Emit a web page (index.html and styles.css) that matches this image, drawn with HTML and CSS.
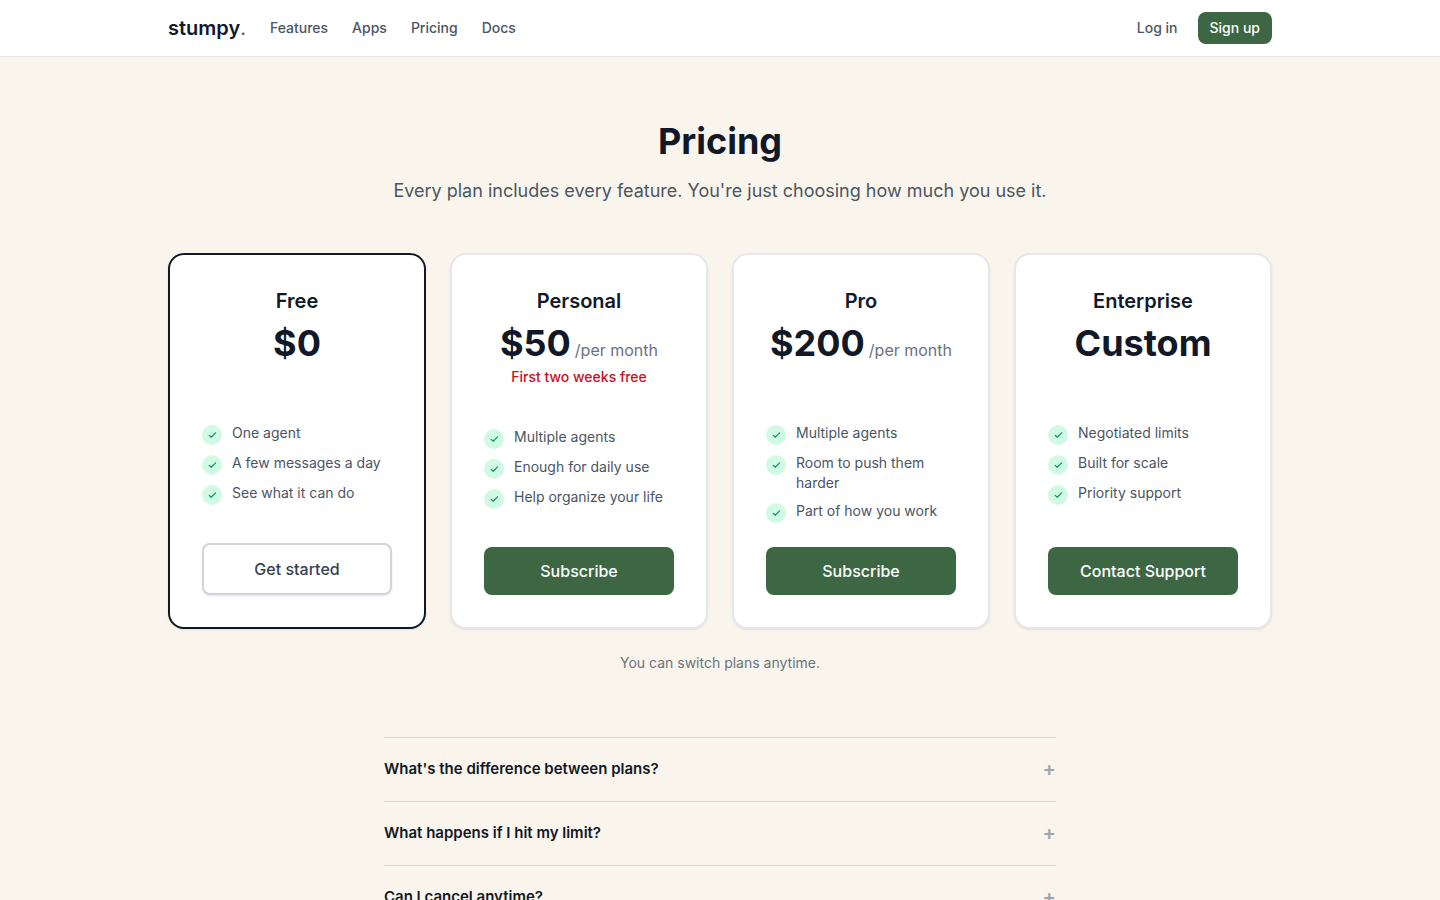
FILE: index.html
```html
<!DOCTYPE html>
<html lang="en">
<head>
<meta charset="utf-8">
<meta name="viewport" content="width=device-width, initial-scale=1">
<title>Pricing - stumpy</title>
<link rel="stylesheet" href="styles.css">
</head>
<body>
<svg class="sprite" aria-hidden="true">
  <symbol id="check" viewBox="0 0 20 20"><path d="M7.2 10.4 L9.2 12.2 L13.6 7.9" fill="none" stroke="currentColor" stroke-width="1.2" stroke-linecap="round" stroke-linejoin="round"/></symbol>
</svg>
<header class="site-header">
  <div class="container header-row">
    <nav class="nav">
      <a class="logo" href="#">stumpy<span class="logo-dot">.</span></a>
      <a class="nav-link" href="#">Features</a>
      <a class="nav-link" href="#">Apps</a>
      <a class="nav-link" href="#">Pricing</a>
      <a class="nav-link" href="#">Docs</a>
    </nav>
    <div class="account">
      <a class="nav-link" href="#">Log in</a>
      <a class="signup" href="#">Sign up</a>
    </div>
  </div>
</header>
<main class="container main">
  <h1 class="title">Pricing</h1>
  <p class="subtitle">Every plan includes every feature. You're just choosing how much you use it.</p>
  <div class="plans">
    <section class="card card-current">
      <h2 class="plan-name">Free</h2>
      <p class="price">$0</p>
      <p class="note note-empty"></p>
      <ul class="features">
        <li class="feature"><svg class="check"><use href="#check"/></svg><span>One agent</span></li>
        <li class="feature"><svg class="check"><use href="#check"/></svg><span>A few messages a day</span></li>
        <li class="feature"><svg class="check"><use href="#check"/></svg><span>See what it can do</span></li>
      </ul>
      <button class="button button-outline" type="button">Get started</button>
    </section>
    <section class="card">
      <h2 class="plan-name">Personal</h2>
      <p class="price">$50 <span class="period">/per month</span></p>
      <p class="note">First two weeks free</p>
      <ul class="features">
        <li class="feature"><svg class="check"><use href="#check"/></svg><span>Multiple agents</span></li>
        <li class="feature"><svg class="check"><use href="#check"/></svg><span>Enough for daily use</span></li>
        <li class="feature"><svg class="check"><use href="#check"/></svg><span>Help organize your life</span></li>
      </ul>
      <button class="button" type="button">Subscribe</button>
    </section>
    <section class="card">
      <h2 class="plan-name">Pro</h2>
      <p class="price">$200 <span class="period">/per month</span></p>
      <p class="note note-empty"></p>
      <ul class="features">
        <li class="feature"><svg class="check"><use href="#check"/></svg><span>Multiple agents</span></li>
        <li class="feature"><svg class="check"><use href="#check"/></svg><span>Room to push them harder</span></li>
        <li class="feature"><svg class="check"><use href="#check"/></svg><span>Part of how you work</span></li>
      </ul>
      <button class="button" type="button">Subscribe</button>
    </section>
    <section class="card">
      <h2 class="plan-name">Enterprise</h2>
      <p class="price">Custom</p>
      <p class="note note-empty"></p>
      <ul class="features">
        <li class="feature"><svg class="check"><use href="#check"/></svg><span>Negotiated limits</span></li>
        <li class="feature"><svg class="check"><use href="#check"/></svg><span>Built for scale</span></li>
        <li class="feature"><svg class="check"><use href="#check"/></svg><span>Priority support</span></li>
      </ul>
      <button class="button" type="button">Contact Support</button>
    </section>
  </div>
  <p class="switch-note">You can switch plans anytime.</p>
  <div class="faq">
    <button class="question" type="button"><span>What's the difference between plans?</span><span class="plus">+</span></button>
    <button class="question" type="button"><span>What happens if I hit my limit?</span><span class="plus">+</span></button>
    <button class="question" type="button"><span>Can I cancel anytime?</span><span class="plus">+</span></button>
  </div>
</main>
</body>
</html>
```

FILE: styles.css
```css
* { box-sizing: border-box; }
html { scrollbar-width: none; }
body {
  margin: 0;
  background: #faf5ec;
  color: #111827;
  font-family: Inter, "Liberation Sans", sans-serif;
  font-size: 14px;
  line-height: 20px;
  font-optical-sizing: auto;
}
h1, h2, p, ul { margin: 0; padding: 0; }
a { color: inherit; text-decoration: none; }
button { font-family: inherit; cursor: pointer; }
.sprite { display: none; }
.container { max-width: 1152px; margin: 0 auto; padding: 0 24px; }

.site-header { background: #fff; border-bottom: 1px solid #e5e7eb; }
.header-row { display: flex; align-items: center; justify-content: space-between; height: 56px; }
.nav { display: flex; align-items: center; gap: 24px; }
.logo { font-size: 20px; line-height: 28px; font-weight: 600; }
.logo-dot { color: #3c6742; font-weight: 400; }
.nav-link { color: #4b5563; font-weight: 500; }
.account { display: flex; align-items: center; gap: 20px; }
.signup { padding: 6px 12px; border-radius: 8px; background: #3c6742; color: #fff; font-weight: 500; }

.main { padding-top: 64px; padding-bottom: 64px; }
.title { font-size: 36px; line-height: 40px; font-weight: 700; text-align: center; }
.subtitle { margin-top: 16px; color: #4b5563; font-size: 18px; line-height: 28px; text-align: center; }

.plans { display: grid; grid-template-columns: repeat(auto-fit, minmax(240px, 1fr)); gap: 24px; margin-top: 48px; }
.card {
  display: flex;
  flex-direction: column;
  padding: 32px;
  border: 2px solid #e5e7eb;
  border-radius: 16px;
  background: #fff;
  box-shadow: 0 1px 2px rgba(0, 0, 0, 0.1);
}
.card-current { border-color: #111827; }
.plan-name { font-size: 20px; line-height: 28px; font-weight: 600; text-align: center; }
.price {
  display: flex;
  align-items: baseline;
  justify-content: center;
  gap: 4px;
  height: 40px;
  margin-top: 8px;
  font-size: 36px;
  line-height: 40px;
  font-weight: 700;
  white-space: nowrap;
}
.period { color: #6b7280; font-size: 16px; line-height: 24px; font-weight: 400; }
.note { margin-top: 4px; color: #c8101e; font-weight: 500; text-align: center; }
.note-empty { height: 20px; margin-top: 0; }
.features { display: flex; flex-direction: column; flex-grow: 1; gap: 8px; margin: 40px 0 24px; list-style: none; }
.feature { display: flex; align-items: flex-start; gap: 10px; color: #4b5563; }
.check { flex: none; width: 20px; height: 20px; margin-top: 2px; border-radius: 50%; background: #d1fae5; color: #059669; }
.button { height: 48px; padding: 0 16px; border: 0; border-radius: 8px; background: #3c6742; color: #fff; font-size: 16px; line-height: 24px; font-weight: 500; }
.button-outline { height: 52px; border: 2px solid #d1d5db; background: #fff; color: #374151; box-shadow: 0 1px 2px rgba(0, 0, 0, 0.1); }
.switch-note { margin-top: 24px; color: #6b7280; text-align: center; }

.faq { max-width: 672px; margin: 64px auto 0; }
.question {
  display: flex;
  align-items: center;
  justify-content: space-between;
  width: 100%;
  padding: 19px 0 20px;
  border: 0;
  border-top: 1px solid #d1d5db;
  background: none;
  color: #111827;
  font-size: 15px;
  line-height: 24px;
  font-weight: 600;
  text-align: left;
}
.plus { color: #9ca3af; font-size: 20px; }
```
